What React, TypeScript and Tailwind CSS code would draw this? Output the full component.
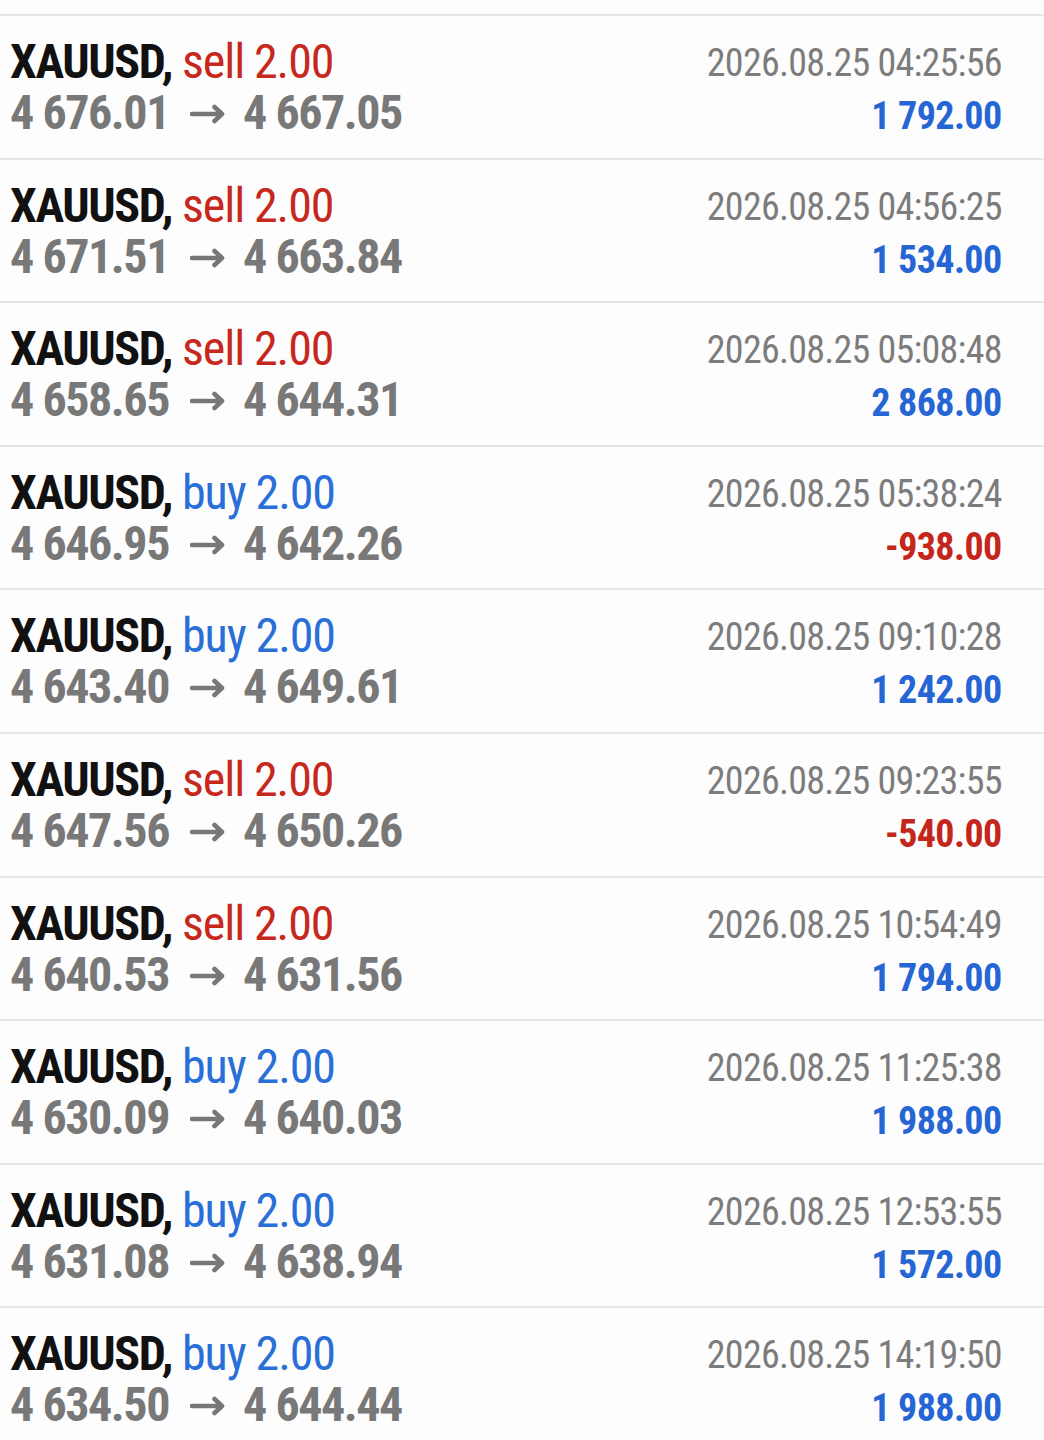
import React from 'react';

type Deal = {
  side: 'buy' | 'sell';
  open: string;
  close: string;
  time: string;
  profit: string;
};

const deals: Deal[] = [
  { side: 'sell', open: '4 676.01', close: '4 667.05', time: '04:25:56', profit: '1 792.00' },
  { side: 'sell', open: '4 671.51', close: '4 663.84', time: '04:56:25', profit: '1 534.00' },
  { side: 'sell', open: '4 658.65', close: '4 644.31', time: '05:08:48', profit: '2 868.00' },
  { side: 'buy', open: '4 646.95', close: '4 642.26', time: '05:38:24', profit: '-938.00' },
  { side: 'buy', open: '4 643.40', close: '4 649.61', time: '09:10:28', profit: '1 242.00' },
  { side: 'sell', open: '4 647.56', close: '4 650.26', time: '09:23:55', profit: '-540.00' },
  { side: 'sell', open: '4 640.53', close: '4 631.56', time: '10:54:49', profit: '1 794.00' },
  { side: 'buy', open: '4 630.09', close: '4 640.03', time: '11:25:38', profit: '1 988.00' },
  { side: 'buy', open: '4 631.08', close: '4 638.94', time: '12:53:55', profit: '1 572.00' },
  { side: 'buy', open: '4 634.50', close: '4 644.44', time: '14:19:50', profit: '1 988.00' },
];

// bold arrow between open and close prices
const Arrow = () => (
  <svg width="36" height="20" viewBox="0 0 36 20" className="ml-[21px] mr-[17px] mt-[3px] inline-block self-center" aria-hidden>
    <path d="M2 10H32M24.5 3L32 10L24.5 17" fill="none" stroke="#777777" strokeWidth="4.6" strokeLinecap="round" strokeLinejoin="round" />
  </svg>
);

const DealRow: React.FC<{ deal: Deal }> = ({ deal }) => {
  const loss = deal.profit.startsWith('-');
  return (
    <div className="flex h-[143.6px] shrink-0 items-start justify-between border-b-2 border-[#e5e5e5] pl-[10px] pr-[43px] pt-[20px]">
      <div className="flex flex-col [font-stretch:condensed]">
        <div className="flex whitespace-nowrap text-[48px] leading-[51px]">
          <span className="font-bold tracking-[-1.4px] text-[#111111]">XAUUSD,</span>
          <span className={`ml-[10px] tracking-[-1.1px] ${deal.side === 'sell' ? 'text-[#c6281e]' : 'text-[#2a6fd8]'}`}>
            {deal.side} 2.00
          </span>
        </div>
        <div className="flex whitespace-nowrap text-[48px] font-bold leading-[51px] tracking-[-1.45px] text-[#787878]">
          <span>{deal.open}</span>
          <Arrow />
          <span>{deal.close}</span>
        </div>
      </div>
      <div className="mt-[1px] flex flex-col items-end [font-stretch:condensed]">
        <div className="mr-[-0.75px] whitespace-nowrap text-[38px] leading-[53px] tracking-[-0.75px] text-[#7c7c7c]">
          2026.08.25 {deal.time}
        </div>
        <div
          className={`mr-[-0.6px] whitespace-nowrap text-[38px] font-bold leading-[53px] tracking-[-0.6px] ${
            loss ? 'text-[#c4261c]' : 'text-[#2566d4]'
          }`}
        >
          {deal.profit}
        </div>
      </div>
    </div>
  );
};

export default function App() {
  return (
    <div className="flex h-[1440px] w-[1044px] flex-col overflow-hidden bg-[#fdfdfd] font-['Roboto',sans-serif]">
      <div className="h-[16px] shrink-0 border-b-2 border-[#e5e5e5]" />
      {deals.map((d, i) => (
        <DealRow key={i} deal={d} />
      ))}
    </div>
  );
}
